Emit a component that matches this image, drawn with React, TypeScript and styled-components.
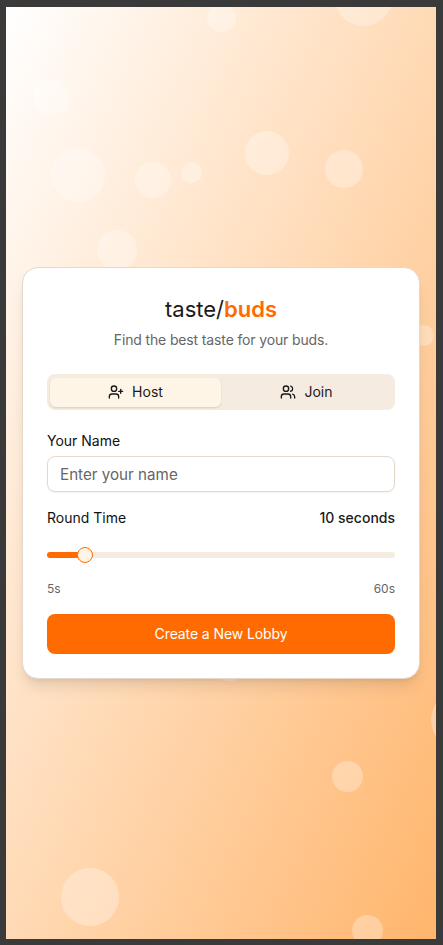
import * as React from 'react';
import styled, { createGlobalStyle } from 'styled-components';
import { UserPlus, Users } from 'lucide-react';

const GlobalStyle = createGlobalStyle`
    html, body {
        margin: 0;
        padding: 0;
        background: #3a3a3a;
    }

    * {
        box-sizing: border-box;
    }
`;

const Frame = styled.div`
    width: 443px;
    height: 945px;
    padding: 7px 7px 6px 6px;
    font-family: Inter, "Liberation Sans", sans-serif;
    overflow: hidden;
`;

const Screen = styled.main`
    position: relative;
    display: flex;
    align-items: center;
    justify-content: center;
    height: 100%;
    padding: 0 16px;
    overflow: hidden;
    background: linear-gradient(to bottom right, #ffffff 0%, #ffb56c 100%);
`;

const Bubble = styled.span`
    position: absolute;
    border-radius: 50%;
    background: rgba(255, 255, 255, 0.3);
`;

const Card = styled.section`
    position: relative;
    width: 100%;
    padding: 24px;
    background: #fff;
    border: 1px solid #e6d9cc;
    border-radius: 16px;
    box-shadow: 0 10px 15px -3px rgba(0, 0, 0, 0.1), 0 4px 6px -4px rgba(0, 0, 0, 0.1);
`;

const Title = styled.h1`
    margin: 0;
    font-size: 22px;
    line-height: 34px;
    font-weight: 400;
    text-align: center;
    color: #1a1a1a;
`;

const Accent = styled.span`
    color: #ff6b00;
    font-weight: 600;
`;

const Subtitle = styled.p`
    margin: 4px 0 0;
    font-size: 14px;
    line-height: 20px;
    letter-spacing: -0.14px;
    text-align: center;
    color: #666;
`;

const Tabs = styled.div`
    display: grid;
    grid-template-columns: 1fr 1fr;
    height: 36px;
    margin-top: 24px;
    padding: 4px 3px 3px;
    background: #f5ebe0;
    border-radius: 8px;
`;

const Tab = styled.button<{ $active?: boolean }>`
    display: flex;
    align-items: center;
    justify-content: center;
    gap: 8px;
    padding: 0 0 1px;
    border: none;
    border-radius: 6px;
    font: 400 14px/20px Inter, "Liberation Sans", sans-serif;
    color: #1a1a1a;
    background: ${(p) => (p.$active ? '#fff5e6' : 'transparent')};
    box-shadow: ${(p) => (p.$active ? '0 1px 2px rgba(0, 0, 0, 0.12)' : 'none')};
`;

const Label = styled.label`
    display: block;
    font-size: 14px;
    line-height: 20px;
    font-weight: 400;
    color: #111;
`;

const TimeValue = styled.span`
    font-size: 14px;
    line-height: 20px;
    font-weight: 500;
    color: #1a1a1a;
`;

const NameField = styled.div`
    display: flex;
    flex-direction: column;
    gap: 5px;
    margin-top: 21px;
`;

const NameInput = styled.input`
    width: 100%;
    height: 36px;
    padding: 0 12px;
    border: 1px solid #e6d9cc;
    border-radius: 8px;
    outline: none;
    background: #fff;
    font: 400 15.2px/24px Inter, "Liberation Sans", sans-serif;
    color: #1a1a1a;
    box-shadow: 0 1px 2px rgba(0, 0, 0, 0.05);

    &::placeholder {
        color: #666;
        opacity: 1;
    }
`;

const SpacedRow = styled.div`
    display: flex;
    align-items: center;
    justify-content: space-between;
`;

const TimeRow = styled(SpacedRow)`
    margin-top: 16px;
`;

const Track = styled.div`
    position: relative;
    height: 6px;
    margin-top: 24px;
    border-radius: 3px;
    background: #f5ebe0;
`;

const TrackFill = styled.div`
    height: 100%;
    border-radius: 3px 0 0 3px;
    background: #ff6b00;
`;

const Thumb = styled.span`
    position: absolute;
    top: -5px;
    width: 16px;
    height: 16px;
    margin-left: -8px;
    border: 1px solid #ff6b00;
    border-radius: 50%;
    background: #fff5e6;
`;

const RangeRow = styled(SpacedRow)`
    margin-top: 23px;
    font-size: 12px;
    line-height: 16px;
    color: #666;
`;

const SubmitButton = styled.button`
    display: block;
    width: 100%;
    height: 40px;
    margin-top: 17px;
    border: none;
    border-radius: 8px;
    background: #ff6b00;
    color: #fff;
    font: 400 14px/20px Inter, "Liberation Sans", sans-serif;
    letter-spacing: -0.1px;
`;

// left, top and diameter inside the screen
const bubbles = [
    [201, -4, 29],
    [329, -38, 57],
    [27, 72, 36],
    [45, 141, 54],
    [129, 155, 36],
    [175, 155, 21],
    [239, 124, 44],
    [319, 143, 38],
    [91, 223, 40],
    [407, 318, 21],
    [204, 634, 40],
    [425, 682, 62],
    [326, 754, 31],
    [55, 861, 58],
    [346, 908, 31]
];

const App: React.FC = () => {
    const fill = ((10 - 5) / 55) * 100;
    // the thumb stays inside the track, so it sits a little ahead of the fill
    const thumbOffset = 8 * (1 - (2 * fill) / 100);

    return (
        <>
            <GlobalStyle />
            <Frame>
                <Screen>
                    {bubbles.map(([left, top, size]) => (
                        <Bubble key={`${left}-${top}`} style={{ left, top, width: size, height: size }} />
                    ))}
                    <Card>
                        <Title>
                            taste/<Accent>buds</Accent>
                        </Title>
                        <Subtitle>Find the best taste for your buds.</Subtitle>
                        <Tabs>
                            <Tab $active>
                                <UserPlus size={16} />
                                Host
                            </Tab>
                            <Tab>
                                <Users size={16} />
                                Join
                            </Tab>
                        </Tabs>
                        <NameField>
                            <Label htmlFor="name">Your Name</Label>
                            <NameInput id="name" placeholder="Enter your name" />
                        </NameField>
                        <TimeRow>
                            <Label>Round Time</Label>
                            <TimeValue>10 seconds</TimeValue>
                        </TimeRow>
                        <Track>
                            <TrackFill style={{ width: `${fill}%` }} />
                            <Thumb style={{ left: `calc(${fill}% + ${thumbOffset}px)` }} />
                        </Track>
                        <RangeRow>
                            <span>5s</span>
                            <span>60s</span>
                        </RangeRow>
                        <SubmitButton>Create a New Lobby</SubmitButton>
                    </Card>
                </Screen>
            </Frame>
        </>
    );
};

export default App;
